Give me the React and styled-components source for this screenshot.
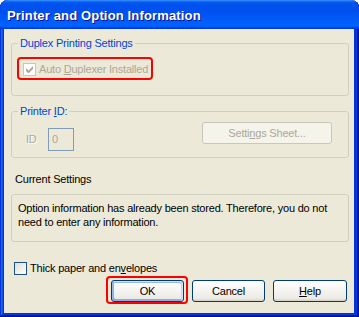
import styled, { createGlobalStyle, css } from "styled-components";

const GlobalStyle = createGlobalStyle`
  html, body {
    margin: 0;
    padding: 0;
    background: #fff;
  }
  body {
    font-family: "Liberation Sans", Arial, sans-serif;
    font-size: 11px;
  }
`;

const Window = styled.div`
  width: 359px;
  height: 317px;
  display: flex;
  flex-direction: column;
  background: #0831d9;
  border-radius: 8px 8px 0 0;
  overflow: hidden;
  box-sizing: border-box;
  padding: 0 5px 4px 4px;
  box-shadow: inset -1px -1px #00138c, inset 1px 0 #0831d9, inset -2px -2px #001ea0,
    inset 2px 0 #166aee, inset -3px -3px #003bda, inset 3px 0 #0855dd;
`;

const TitleBar = styled.div`
  height: 29px;
  flex-shrink: 0;
  margin: 0 -5px 0 -4px;
  padding: 0 0 0 7px;
  display: flex;
  align-items: center;
  border-radius: 8px 8px 0 0;
  background: linear-gradient(
    180deg,
    #3d95ff 0%,
    #0a62f0 6%,
    #0053ee 12%,
    #0050ee 40%,
    #0062ff 85%,
    #005bff 92%,
    #003dd7 96%,
    #003dd7 100%
  );
`;

const Title = styled.div`
  color: #fff;
  font-family: "Liberation Sans", Arial, sans-serif;
  font-weight: 700;
  font-size: 13px;
  letter-spacing: 0.15px;
  text-shadow: 1px 1px #0f1089;
  margin-top: 2px;
`;

const Client = styled.div`
  flex: 1;
  background: #ece9d8;
  padding: 0 5px 0 7px;
  display: flex;
  flex-direction: column;
  color: #000;
  letter-spacing: -0.2px;
`;

/* padding-left stays 0 so the legend sits at the same place in every box */
const GroupBox = styled.fieldset`
  margin: ${({ $top }) => $top}px 0 0 0;
  padding: ${({ $pt }) => $pt}px 0 ${({ $pb }) => $pb}px 0;
  border: 1px solid #d0d0bf;
  border-radius: 3px;
  min-width: 0;
`;

const Legend = styled.legend`
  color: #0046d5;
  line-height: 13px;
  padding: 0 2px;
  margin-left: 6px;
`;

const Row = styled.div`
  display: flex;
  align-items: ${({ $align }) => $align || "center"};
  padding: ${({ $pad }) => $pad || "0"};
`;

const Highlight = styled.span`
  position: relative;
  display: inline-flex;
  align-items: center;
  &::after {
    content: "";
    position: absolute;
    inset: ${({ $inset }) => $inset};
    border: 2px solid #f00;
    border-radius: 4px;
    pointer-events: none;
  }
`;

const CheckLabel = styled.label`
  display: inline-flex;
  align-items: center;
  gap: 3px;
  line-height: 13px;
  color: ${({ $disabled }) => ($disabled ? "#aca899" : "#000")};
`;

const Box = styled.span`
  width: 13px;
  height: 13px;
  box-sizing: border-box;
  display: inline-flex;
  align-items: center;
  justify-content: center;
  ${({ $disabled }) =>
    $disabled
      ? css`
          border: 1px solid #cac8bb;
          background: #fff;
        `
      : css`
          border: 1px solid #1c5180;
          background: linear-gradient(135deg, #dcdcd7, #fff);
        `}
`;

const Check = ({ color }) => (
  <svg width="7" height="7" viewBox="0 0 7 7">
    <path d="M0 2v3l2 2h1l4-4V0L2.5 4.5z" fill={color} />
  </svg>
);

const Checkbox = ({ checked, disabled, children }) => (
  <CheckLabel $disabled={disabled}>
    <Box $disabled={disabled}>{checked && <Check color="#aca899" />}</Box>
    <span>{children}</span>
  </CheckLabel>
);

const FieldLabel = styled.span`
  color: #aca899;
  text-shadow: 1px 1px #fff;
  line-height: 13px;
  margin-top: 11px;
  width: 22px;
`;

const TextBox = styled.div`
  width: 26px;
  height: 23px;
  box-sizing: border-box;
  margin-top: 6px;
  border: 1px solid #7f9db9;
  background: #ece9d8;
  color: #aca899;
  padding: 4px 0 0 3px;
  line-height: 13px;
`;

const Button = styled.button`
  font: inherit;
  letter-spacing: inherit;
  width: ${({ $w }) => $w || 73}px;
  height: 22px;
  padding: 0;
  box-sizing: border-box;
  border-radius: 3px;
  color: #000;
  border: 1px solid #003c74;
  background: linear-gradient(180deg, #fff, #ecebe6 86%, #d6d0c5);
  ${({ $default }) =>
    $default &&
    css`
      box-shadow: inset -1px 1px #cee7ff, inset 1px 2px #98b8ea,
        inset -2px 2px #bcd4f6, inset 1px -1px #89ade4, inset 2px -2px #89ade4;
    `}
  ${({ disabled }) =>
    disabled &&
    css`
      border-color: #c9c7ba;
      background: #f5f4ea;
      color: #aca899;
    `}
`;

const SheetButton = styled(Button)`
  margin-left: auto;
`;

const SectionLabel = styled.div`
  margin: 15px 0 0 4px;
  line-height: 13px;
`;

const InfoFrame = styled.div`
  margin-top: 8px;
  border: 1px solid #d0d0bf;
  border-radius: 3px;
  padding: 6px 4px 12px 6px;
  line-height: 14px;
`;

const OptionRow = styled(Row)`
  margin: 20px 0 0 3px;
`;

const ButtonBar = styled.div`
  display: flex;
  justify-content: flex-end;
  gap: 8px;
  margin-top: 5px;
  padding-right: 2px;
`;

export default function App() {
  return (
    <>
      <GlobalStyle />
      <Window>
        <TitleBar>
          <Title>Printer and Option Information</Title>
        </TitleBar>
        <Client>
          <GroupBox $top={8} $pt={13} $pb={19}>
            <Legend>Duplex Printing Settings</Legend>
            <Row $pad="0 0 0 11px">
              <Highlight $inset="-6px -5px -4px -6px">
                <Checkbox checked disabled>
                  Auto <u>D</u>uplexer Installed
                </Checkbox>
              </Highlight>
            </Row>
          </GroupBox>

          <GroupBox $top={9} $pt={4} $pb={6}>
            <Legend>
              Printer <u>I</u>D:
            </Legend>
            <Row $align="flex-start" $pad="0 16px 0 14px">
              <FieldLabel>ID</FieldLabel>
              <TextBox>0</TextBox>
              <SheetButton $w={130} disabled>
                Setti<u>n</u>gs Sheet...
              </SheetButton>
            </Row>
          </GroupBox>

          <SectionLabel>Current Settings</SectionLabel>
          <InfoFrame>
            Option information has already been stored. Therefore, you do not
            <br />
            need to enter any information.
          </InfoFrame>

          <OptionRow>
            <Checkbox>
              Thick paper and en<u>v</u>elopes
            </Checkbox>
          </OptionRow>

          <ButtonBar>
            <Highlight $inset="-4px -4px -2px -5px">
              <Button $default>OK</Button>
            </Highlight>
            <Button>Cancel</Button>
            <Button $w={74}>
              <u>H</u>elp
            </Button>
          </ButtonBar>
        </Client>
      </Window>
    </>
  );
}
